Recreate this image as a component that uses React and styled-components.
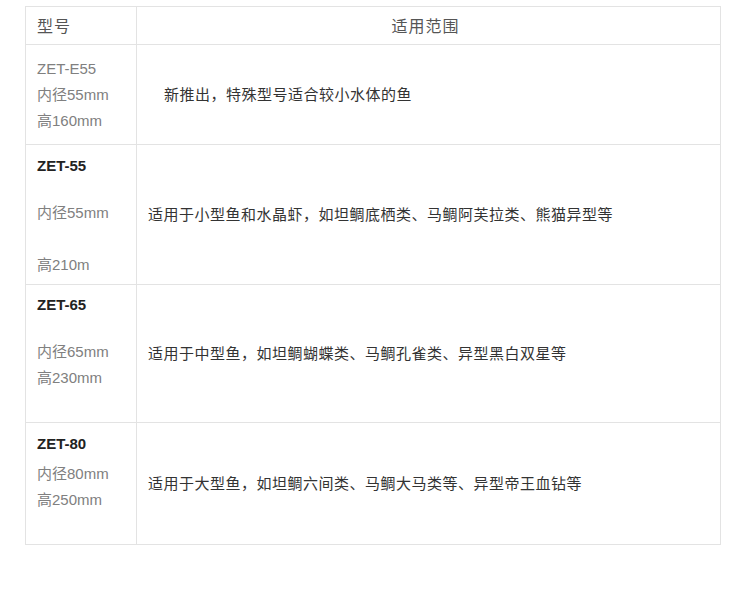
import React from "react";
import styled, { createGlobalStyle } from "styled-components";

const GlobalStyle = createGlobalStyle`
  html, body {
    margin: 0;
    padding: 0;
    background: #fff;
  }
  body {
    font-family: "Liberation Sans", "Noto Sans CJK SC", sans-serif;
  }
`;

const Page = styled.div`
  width: 750px;
  height: 605px;
  padding: 6px 0 0 25px;
  box-sizing: border-box;
`;

const Table = styled.div`
  width: 696px;
  display: grid;
  grid-template-columns: 111px 1fr;
  grid-template-rows: 38px 100px 140px 138px 122px;
  border-top: 1px solid #e3e3e3;
  border-left: 1px solid #e3e3e3;
  box-sizing: border-box;
`;

const Cell = styled.div`
  border-right: 1px solid #e3e3e3;
  border-bottom: 1px solid #e3e3e3;
  box-sizing: border-box;
  display: flex;
  flex-direction: column;
  justify-content: ${({ top }) => (top ? "flex-start" : "center")};
  align-items: ${({ centered }) => (centered ? "center" : "flex-start")};
  padding: ${({ top, pad, centered }) =>
    top ? `${pad ?? 8}px 0 0 11px` : centered ? "0 6px 0 0" : "0 0 0 11px"};
`;

const HeadText = styled.div`
  font-size: 16px;
  letter-spacing: 1px;
  color: #555;
  line-height: 20px;
  margin-top: 2px;
`;

const ModelLine = styled.div`
  font-size: 15px;
  line-height: 26px;
  margin-top: ${({ gap }) => gap || 0}px;
  color: ${({ bold }) => (bold ? "#222" : "#808080")};
  font-weight: ${({ bold }) => (bold ? 700 : 400)};
  white-space: nowrap;
`;

const UseText = styled.div`
  font-size: 15px;
  letter-spacing: 0.5px;
  line-height: 24px;
  color: #333;
  padding-left: ${({ indent }) => indent || 0}px;
  white-space: nowrap;
`;

const rows = [
  {
    pad: 11,
    lines: [
      { text: "ZET-E55" },
      { text: "内径55mm" },
      { text: "高160mm" },
    ],
    use: "新推出，特殊型号适合较小水体的鱼",
    indent: 16,
  },
  {
    pad: 8,
    lines: [
      { text: "ZET-55", bold: true },
      { text: "内径55mm", gap: 21 },
      { text: "高210m", gap: 26 },
    ],
    use: "适用于小型鱼和水晶虾，如坦鲷底栖类、马鲷阿芙拉类、熊猫异型等",
  },
  {
    pad: 7,
    lines: [
      { text: "ZET-65", bold: true },
      { text: "内径65mm", gap: 21 },
      { text: "高230mm" },
    ],
    use: "适用于中型鱼，如坦鲷蝴蝶类、马鲷孔雀类、异型黑白双星等",
  },
  {
    pad: 8,
    lines: [
      { text: "ZET-80", bold: true },
      { text: "内径80mm", gap: 4 },
      { text: "高250mm" },
    ],
    use: "适用于大型鱼，如坦鲷六间类、马鲷大马类等、异型帝王血钻等",
  },
];

const App = () => {
  return (
    <Page>
      <GlobalStyle />
      <Table>
        <Cell>
          <HeadText>型号</HeadText>
        </Cell>
        <Cell centered>
          <HeadText>适用范围</HeadText>
        </Cell>
        {rows.map((row, index) => (
          <React.Fragment key={index}>
            <Cell top pad={row.pad}>
              {row.lines.map((line, i) => (
                <ModelLine key={i} bold={line.bold} gap={line.gap}>
                  {line.text}
                </ModelLine>
              ))}
            </Cell>
            <Cell>
              <UseText indent={row.indent}>{row.use}</UseText>
            </Cell>
          </React.Fragment>
        ))}
      </Table>
    </Page>
  );
};

export default App;
